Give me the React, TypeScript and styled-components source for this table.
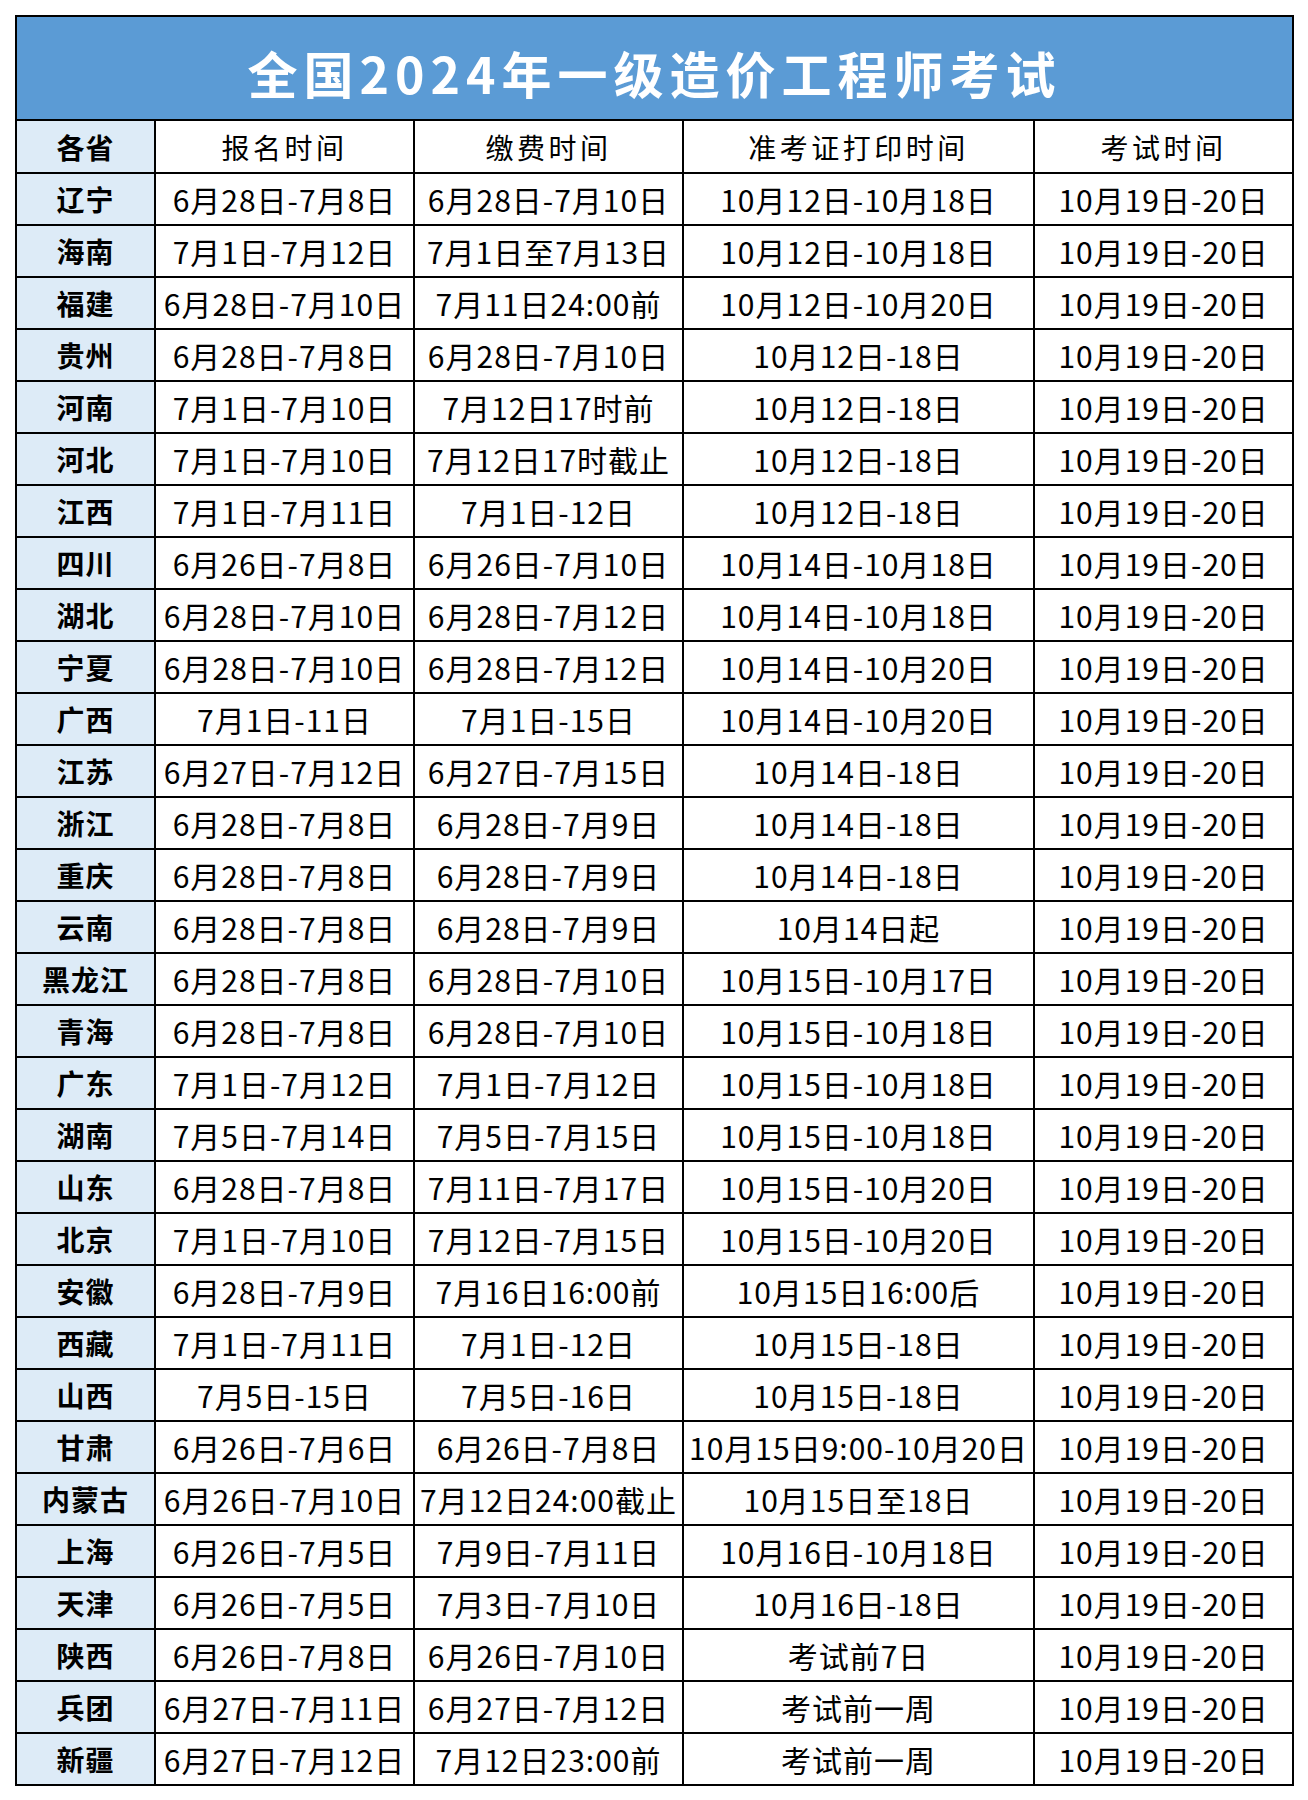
import React from "react";
import styled, { createGlobalStyle } from "styled-components";

const GlobalStyle = createGlobalStyle`
  html, body {
    margin: 0;
    padding: 0;
    background: #ffffff;
  }
  body {
    font-family: "Noto Sans CJK SC", "Noto Sans", sans-serif;
    color: #000000;
  }
`;

type Row = [string, string, string, string, string];

const rows: Row[] = [
  ["辽宁", "6月28日-7月8日", "6月28日-7月10日", "10月12日-10月18日", "10月19日-20日"],
  ["海南", "7月1日-7月12日", "7月1日至7月13日", "10月12日-10月18日", "10月19日-20日"],
  ["福建", "6月28日-7月10日", "7月11日24:00前", "10月12日-10月20日", "10月19日-20日"],
  ["贵州", "6月28日-7月8日", "6月28日-7月10日", "10月12日-18日", "10月19日-20日"],
  ["河南", "7月1日-7月10日", "7月12日17时前", "10月12日-18日", "10月19日-20日"],
  ["河北", "7月1日-7月10日", "7月12日17时截止", "10月12日-18日", "10月19日-20日"],
  ["江西", "7月1日-7月11日", "7月1日-12日", "10月12日-18日", "10月19日-20日"],
  ["四川", "6月26日-7月8日", "6月26日-7月10日", "10月14日-10月18日", "10月19日-20日"],
  ["湖北", "6月28日-7月10日", "6月28日-7月12日", "10月14日-10月18日", "10月19日-20日"],
  ["宁夏", "6月28日-7月10日", "6月28日-7月12日", "10月14日-10月20日", "10月19日-20日"],
  ["广西", "7月1日-11日", "7月1日-15日", "10月14日-10月20日", "10月19日-20日"],
  ["江苏", "6月27日-7月12日", "6月27日-7月15日", "10月14日-18日", "10月19日-20日"],
  ["浙江", "6月28日-7月8日", "6月28日-7月9日", "10月14日-18日", "10月19日-20日"],
  ["重庆", "6月28日-7月8日", "6月28日-7月9日", "10月14日-18日", "10月19日-20日"],
  ["云南", "6月28日-7月8日", "6月28日-7月9日", "10月14日起", "10月19日-20日"],
  ["黑龙江", "6月28日-7月8日", "6月28日-7月10日", "10月15日-10月17日", "10月19日-20日"],
  ["青海", "6月28日-7月8日", "6月28日-7月10日", "10月15日-10月18日", "10月19日-20日"],
  ["广东", "7月1日-7月12日", "7月1日-7月12日", "10月15日-10月18日", "10月19日-20日"],
  ["湖南", "7月5日-7月14日", "7月5日-7月15日", "10月15日-10月18日", "10月19日-20日"],
  ["山东", "6月28日-7月8日", "7月11日-7月17日", "10月15日-10月20日", "10月19日-20日"],
  ["北京", "7月1日-7月10日", "7月12日-7月15日", "10月15日-10月20日", "10月19日-20日"],
  ["安徽", "6月28日-7月9日", "7月16日16:00前", "10月15日16:00后", "10月19日-20日"],
  ["西藏", "7月1日-7月11日", "7月1日-12日", "10月15日-18日", "10月19日-20日"],
  ["山西", "7月5日-15日", "7月5日-16日", "10月15日-18日", "10月19日-20日"],
  ["甘肃", "6月26日-7月6日", "6月26日-7月8日", "10月15日9:00-10月20日", "10月19日-20日"],
  ["内蒙古", "6月26日-7月10日", "7月12日24:00截止", "10月15日至18日", "10月19日-20日"],
  ["上海", "6月26日-7月5日", "7月9日-7月11日", "10月16日-10月18日", "10月19日-20日"],
  ["天津", "6月26日-7月5日", "7月3日-7月10日", "10月16日-18日", "10月19日-20日"],
  ["陕西", "6月26日-7月8日", "6月26日-7月10日", "考试前7日", "10月19日-20日"],
  ["兵团", "6月27日-7月11日", "6月27日-7月12日", "考试前一周", "10月19日-20日"],
  ["新疆", "6月27日-7月12日", "7月12日23:00前", "考试前一周", "10月19日-20日"],
];

const headers = ["报名时间", "缴费时间", "准考证打印时间", "考试时间"];
const columnWidths = [139, 259, 269, 351, 259];

const Page = styled.div`
  padding: 15px;
`;

const Sheet = styled.table`
  width: 1278px;
  border-collapse: collapse;
  table-layout: fixed;
  border: 2px solid #000;
`;

const TitleCell = styled.th`
  height: 94px;
  padding: 8px 0 0;
  background: #5b9bd5;
  border: 2px solid #000;
  color: #ffffff;
  font-size: 50px;
  font-weight: 700;
  letter-spacing: 6px;
  line-height: 1;
  text-align: center;
  vertical-align: middle;
`;

const Cell = styled.td<{ $province?: boolean; $header?: boolean }>`
  height: 50px;
  padding: 0;
  border: 2px solid #000;
  background: ${({ $province }) => ($province ? "#ddebf7" : "#ffffff")};
  font-size: ${({ $province, $header }) =>
    $province || $header ? "28px" : "30px"};
  font-weight: ${({ $province }) => ($province ? 700 : 400)};
  letter-spacing: ${({ $header, $province }) =>
    $province ? "1px" : $header ? "3.5px" : "1px"};
  line-height: 1;
  text-align: center;
  vertical-align: middle;
  white-space: nowrap;
`;

const HeaderRow = styled.tr`
  td {
    height: 51px;
  }
`;

export default function App() {
  return (
    <>
      <GlobalStyle />
      <Page>
        <Sheet>
          <colgroup>
            {columnWidths.map((w, i) => (
              <col key={i} style={{ width: w }} />
            ))}
          </colgroup>
          <tbody>
            <tr>
              <TitleCell colSpan={5}>全国2024年一级造价工程师考试</TitleCell>
            </tr>
            <HeaderRow>
              <Cell $province $header>
                各省
              </Cell>
              {headers.map((h) => (
                <Cell key={h} $header>
                  {h}
                </Cell>
              ))}
            </HeaderRow>
            {rows.map((r) => (
              <tr key={r[0]}>
                <Cell $province>{r[0]}</Cell>
                {r.slice(1).map((v, i) => (
                  <Cell key={i}>{v}</Cell>
                ))}
              </tr>
            ))}
          </tbody>
        </Sheet>
      </Page>
    </>
  );
}
